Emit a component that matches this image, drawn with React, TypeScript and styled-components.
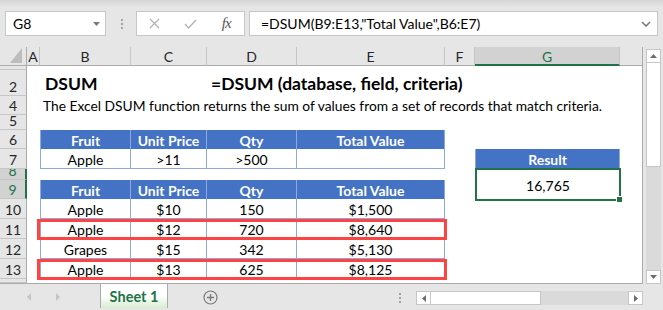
import React from 'react';
import styled, { createGlobalStyle } from 'styled-components';

const GREEN = '#217346';
const BLUE = '#4472c4';
const BLUE_LINE = '#8ea9db';
const CHROME = '#e6e6e6';
const LINE = '#c6c6c6';
const CELL_FONT = 'Lato, "Noto Sans", sans-serif';

const GlobalStyle = createGlobalStyle`
    html, body {
        margin: 0;
        padding: 0;
    }
    body {
        background: ${CHROME};
        font-family: ${CELL_FONT};
    }
`;

const Window = styled.div`
    width: 663px;
    height: 310px;
    display: flex;
    flex-direction: column;
    background: ${CHROME};
    overflow: hidden;
    color: #000;
`;

/* ---------- formula bar ---------- */

const FormulaBar = styled.div`
    height: 47px;
    flex: none;
    box-sizing: border-box;
    display: flex;
    align-items: center;
    padding: 0 5px;
    background: linear-gradient(#d5d5d5 0, ${CHROME} 7px);
`;

const NameBox = styled.div`
    width: 101px;
    height: 25px;
    box-sizing: border-box;
    background: #fff;
    border: 1px solid ${LINE};
    display: flex;
    align-items: center;
    justify-content: space-between;
    padding: 0 5px 0 7px;
    font-size: 14px;
`;

const Grip = styled.div<{ $left: number; $right: number }>`
    display: flex;
    flex-direction: column;
    gap: 2px;
    margin: 0 ${(p) => p.$right}px 0 ${(p) => p.$left}px;

    span {
        width: 2px;
        height: 2px;
        background: #a3a3a3;
    }
`;

const FxButtons = styled.div`
    width: 109px;
    height: 25px;
    box-sizing: border-box;
    background: #fff;
    border: 1px solid ${LINE};
    display: grid;
    grid-template-columns: repeat(3, 1fr);
    align-items: center;
    justify-items: center;
`;

const FxLabel = styled.span`
    font-family: 'Liberation Serif', serif;
    font-style: italic;
    font-size: 15px;
    color: #555;
    letter-spacing: -1px;
`;

const FormulaInput = styled.div`
    flex: 1;
    height: 25px;
    margin-left: 4px;
    box-sizing: border-box;
    background: #fff;
    border: 1px solid ${LINE};
    display: flex;
    align-items: center;
    justify-content: space-between;
    padding: 0 6px 0 11px;
    font-size: 14px;
`;

/* ---------- sheet ---------- */

const MainArea = styled.div`
    display: flex;
    height: 237px;
    flex: none;
`;

const Sheet = styled.div<{ $cols: string; $rows: string }>`
    width: 643px;
    height: 237px;
    box-sizing: border-box;
    display: grid;
    grid-template-columns: ${(p) => p.$cols};
    grid-template-rows: ${(p) => p.$rows};
    background: #fff;
    border-right: 1px solid #ababab;
    border-bottom: 1px solid #ababab;
    overflow: hidden;
    font-size: 14px;
`;

const Cell = styled.div<{ $col: string; $row: string }>`
    grid-column: ${(p) => p.$col};
    grid-row: ${(p) => p.$row};
    min-width: 0;
    min-height: 0;
    box-sizing: border-box;
`;

const Corner = styled(Cell)`
    background: ${CHROME};
    border-right: 1px solid #ababab;
    border-bottom: 1px solid #ababab;
    display: flex;
    align-items: flex-end;
    justify-content: flex-end;
    padding: 0 4px 2px 0;
`;

const ColHeader = styled(Cell)<{ $selected?: boolean; $blank?: boolean }>`
    background: ${(p) => (p.$selected ? '#d2d2d2' : CHROME)};
    border-right: ${(p) => (p.$blank ? 'none' : `1px solid ${LINE}`)};
    border-bottom: ${(p) => (p.$selected ? `2px solid ${GREEN}` : '1px solid #ababab')};
    color: ${(p) => (p.$selected ? GREEN : '#262626')};
    display: flex;
    align-items: center;
    justify-content: center;
    font-size: 14px;
    padding-top: 1px;
`;

const RowHeader = styled(Cell)<{ $selected?: boolean }>`
    background: ${(p) => (p.$selected ? '#d2d2d2' : CHROME)};
    border-right: ${(p) => (p.$selected ? `2px solid ${GREEN}` : '1px solid #ababab')};
    border-bottom: 1px solid ${LINE};
    color: ${(p) => (p.$selected ? GREEN : '#262626')};
    display: flex;
    align-items: flex-end;
    justify-content: center;
    overflow: hidden;
    font-size: 14px;
    line-height: 14px;
    padding-bottom: 1px;
`;

const Title = styled(Cell)<{ $indent: number }>`
    display: flex;
    align-items: center;
    padding-left: ${(p) => p.$indent}px;
    font-weight: 700;
    font-size: 17.5px;
    white-space: nowrap;
    overflow: visible;
`;

const Description = styled(Cell)`
    display: flex;
    align-items: center;
    padding-left: 3px;
    white-space: nowrap;
    font-size: 13.8px;
`;

const HeadCell = styled(Cell)<{ $first?: boolean }>`
    background: ${BLUE};
    color: #fff;
    font-weight: 700;
    display: flex;
    align-items: center;
    justify-content: center;
    padding-top: 1px;
    border-right: 1px solid ${BLUE_LINE};
    border-left: ${(p) => (p.$first ? `1px solid ${BLUE_LINE}` : 'none')};
`;

const BodyCell = styled(Cell)<{ $first?: boolean }>`
    display: flex;
    align-items: center;
    justify-content: center;
    padding-top: 2px;
    white-space: nowrap;
    border-right: 1px solid ${BLUE_LINE};
    border-bottom: 1px solid ${BLUE_LINE};
    border-left: ${(p) => (p.$first ? `1px solid ${BLUE_LINE}` : 'none')};
`;

const Highlight = styled(Cell)`
    margin: 0 -2px -1px -3px;
    border: 3px solid #ff4343;
    pointer-events: none;
`;

const Selection = styled(Cell)`
    position: relative;
    margin: -1px -1px -2px 0;
    border: 2px solid ${GREEN};
    display: flex;
    align-items: center;
    justify-content: center;
    padding-top: 1px;
`;

const FillHandle = styled.span`
    position: absolute;
    right: -4px;
    bottom: -4px;
    width: 5px;
    height: 5px;
    background: ${GREEN};
    border: 1px solid #fff;
`;

/* ---------- scrollbars ---------- */

const VScrollWrap = styled.div`
    width: 20px;
    box-sizing: border-box;
    padding: 2px 2px 0 3px;
    display: flex;
`;

const ScrollTrack = styled.div<{ $vertical?: boolean }>`
    flex: 1;
    display: flex;
    flex-direction: ${(p) => (p.$vertical ? 'column' : 'row')};
    background: #dadada;
`;

const ScrollButton = styled.div<{ $vertical?: boolean }>`
    ${(p) => (p.$vertical ? 'height: 14px;' : 'width: 15px;')}
    flex: none;
    box-sizing: border-box;
    background: #fff;
    border: 1px solid ${LINE};
    display: flex;
    align-items: center;
    justify-content: center;
`;

const Thumb = styled.div<{ $vertical?: boolean; $size: number }>`
    ${(p) => (p.$vertical ? `height: ${p.$size}px;` : `width: ${p.$size}px;`)}
    flex: none;
    box-sizing: border-box;
    background: #fff;
    border: 1px solid ${LINE};
    ${(p) => (p.$vertical ? 'border-top: none;' : 'border-left: none;')}
`;

const Spacer = styled.div`
    flex: 1;
`;

/* ---------- sheet tabs ---------- */

const TabBar = styled.div`
    flex: 1;
    display: flex;
    align-items: flex-start;
`;

const TabNav = styled.div`
    width: 100px;
    height: 26px;
    display: flex;
    align-items: center;
    padding-left: 27px;
    gap: 25px;
    box-sizing: border-box;
`;

const SheetTab = styled.div`
    width: 68px;
    height: 24px;
    box-sizing: border-box;
    background: linear-gradient(#fff 50%, #d9ecd0);
    border-left: 1px solid #ababab;
    border-right: 1px solid #ababab;
    color: ${GREEN};
    font-weight: 700;
    font-size: 14.5px;
    display: flex;
    align-items: center;
    justify-content: center;
    padding-top: 1px;
`;

const AddSheet = styled.div`
    margin: 6px 0 0 35px;
    display: flex;
`;

const GripSlot = styled.div`
    margin-top: 9px;
`;

const HScroll = styled.div`
    width: 227px;
    height: 14px;
    margin-top: 7px;
    display: flex;
`;

/* ---------- icons ---------- */

const Arrow: React.FC<{ dir: 'up' | 'down' | 'left' | 'right'; color?: string; w?: number; h?: number }> = ({
    dir,
    color = '#6d6d6d',
    w = 7,
    h = 4,
}) => {
    const horizontal = dir === 'left' || dir === 'right';
    const width = horizontal ? h : w;
    const height = horizontal ? w : h;
    const points = {
        up: `0,${h} ${w / 2},0 ${w},${h}`,
        down: `0,0 ${w},0 ${w / 2},${h}`,
        left: `${h},0 ${h},${w} 0,${w / 2}`,
        right: `0,0 0,${w} ${h},${w / 2}`,
    }[dir];
    return (
        <svg width={width} height={height} viewBox={`0 0 ${width} ${height}`}>
            <polygon points={points} fill={color} />
        </svg>
    );
};

const GripDots: React.FC<{ left: number; right: number }> = ({ left, right }) => (
    <Grip $left={left} $right={right}>
        <span />
        <span />
        <span />
    </Grip>
);

/* ---------- data ---------- */

const COLS = [
    { name: 'A', width: 13 },
    { name: 'B', width: 91 },
    { name: 'C', width: 76 },
    { name: 'D', width: 90 },
    { name: 'E', width: 148 },
    { name: 'F', width: 30 },
    { name: 'G', width: 145, selected: true },
];

// row 3 is hidden in the sheet, row 14 only peeks in at the bottom
const ROWS = [
    { label: '1', height: 4 },
    { label: '2', height: 26 },
    { label: '4', height: 19 },
    { label: '5', height: 15 },
    { label: '6', height: 19 },
    { label: '7', height: 20 },
    { label: '8', height: 11, selected: true },
    { label: '9', height: 19, selected: true },
    { label: '10', height: 20 },
    { label: '11', height: 20 },
    { label: '12', height: 20 },
    { label: '13', height: 20 },
    { label: '14', height: 0, hidden: true },
];

const col = (name: string) => COLS.findIndex((c) => c.name === name) + 2;
const row = (label: string) => ROWS.findIndex((r) => r.label === label) + 2;
const span = (from: string, to: string) => `${col(from)} / ${col(to) + 1}`;

const FIELDS = ['Fruit', 'Unit Price', 'Qty', 'Total Value'];
const FIELD_COLS = ['B', 'C', 'D', 'E'];

const CRITERIA = [['Apple', '>11', '>500', '']];
const RECORDS = [
    ['Apple', '$10', '150', '$1,500'],
    ['Apple', '$12', '720', '$8,640'],
    ['Grapes', '$15', '342', '$5,130'],
    ['Apple', '$13', '625', '$8,125'],
];
const HIGHLIGHTED = ['11', '13'];

const DataTable: React.FC<{ headerRow: number; rows: string[][] }> = ({ headerRow, rows }) => (
    <>
        {FIELDS.map((f, i) => (
            <HeadCell key={f} $col={`${col(FIELD_COLS[i])}`} $row={`${headerRow}`} $first={i === 0}>
                {f}
            </HeadCell>
        ))}
        {rows.map((r, ri) =>
            r.map((v, ci) => (
                <BodyCell
                    key={`${ri}-${ci}`}
                    $col={`${col(FIELD_COLS[ci])}`}
                    $row={`${headerRow + ri + 1}`}
                    $first={ci === 0}
                >
                    {v}
                </BodyCell>
            ))
        )}
    </>
);

const App: React.FC = () => {
    const gridCols = `27px ${COLS.map((c) => `${c.width}px`).join(' ')} 1fr`;
    const gridRows = `19px ${ROWS.map((r) => (r.height ? `${r.height}px` : '1fr')).join(' ')}`;

    return (
        <Window>
            <GlobalStyle />
            <FormulaBar>
                <NameBox>
                    <span>G8</span>
                    <Arrow dir="down" color="#7a7a7a" />
                </NameBox>
                <GripDots left={15} right={13} />
                <FxButtons>
                    <svg width="11" height="11" viewBox="0 0 11 11">
                        <path d="M1 1 L10 10 M10 1 L1 10" stroke="#b3b3b3" strokeWidth="1.3" fill="none" />
                    </svg>
                    <svg width="13" height="10" viewBox="0 0 13 10">
                        <path d="M1 5 L4.5 9 L12 1" stroke="#b3b3b3" strokeWidth="1.3" fill="none" />
                    </svg>
                    <FxLabel>fx</FxLabel>
                </FxButtons>
                <FormulaInput>
                    <span>=DSUM(B9:E13,"Total Value",B6:E7)</span>
                    <svg width="10" height="6" viewBox="0 0 10 6">
                        <path d="M1 1 L5 5 L9 1" stroke="#7a7a7a" strokeWidth="1.6" fill="none" />
                    </svg>
                </FormulaInput>
            </FormulaBar>

            <MainArea>
                <Sheet $cols={gridCols} $rows={gridRows}>
                    <Corner $col="1" $row="1">
                        <svg width="12" height="15" viewBox="0 0 12 15">
                            <polygon points="12,0 12,15 0,15" fill="#bdbdbd" />
                        </svg>
                    </Corner>
                    {COLS.map((c) => (
                        <ColHeader key={c.name} $col={`${col(c.name)}`} $row="1" $selected={c.selected}>
                            {c.name}
                        </ColHeader>
                    ))}
                    <ColHeader $col={`${COLS.length + 2}`} $row="1" $blank />
                    {ROWS.map((r) => (
                        <RowHeader key={r.label} $col="1" $row={`${row(r.label)}`} $selected={r.selected}>
                            {r.hidden ? null : r.label}
                        </RowHeader>
                    ))}

                    <Title $col={span('B', 'B')} $row={`${row('2')}`} $indent={5}>
                        DSUM
                    </Title>
                    <Title $col={span('D', 'F')} $row={`${row('2')}`} $indent={4}>
                        =DSUM (database, field, criteria)
                    </Title>
                    <Description $col={span('B', 'G')} $row={`${row('4')}`}>
                        The Excel DSUM function returns the sum of values from a set of records that match criteria.
                    </Description>

                    <DataTable headerRow={row('6')} rows={CRITERIA} />
                    <DataTable headerRow={row('9')} rows={RECORDS} />

                    <HeadCell $col={`${col('G')}`} $row={`${row('7')}`} $first>
                        Result
                    </HeadCell>
                    <Selection $col={`${col('G')}`} $row={`${row('8')} / ${row('9') + 1}`}>
                        16,765
                        <FillHandle />
                    </Selection>

                    {HIGHLIGHTED.map((r) => (
                        <Highlight key={r} $col={span('B', 'E')} $row={`${row(r)}`} />
                    ))}
                </Sheet>

                <VScrollWrap>
                    <ScrollTrack $vertical>
                        <ScrollButton $vertical>
                            <Arrow dir="up" />
                        </ScrollButton>
                        <Thumb $vertical $size={104} />
                        <Spacer />
                        <ScrollButton $vertical>
                            <Arrow dir="down" />
                        </ScrollButton>
                    </ScrollTrack>
                </VScrollWrap>
            </MainArea>

            <TabBar>
                <TabNav>
                    <Arrow dir="left" color="#c4c4c4" w={8} h={4} />
                    <Arrow dir="right" color="#c4c4c4" w={8} h={4} />
                </TabNav>
                <SheetTab>Sheet 1</SheetTab>
                <AddSheet>
                    <svg width="15" height="15" viewBox="0 0 15 15">
                        <circle cx="7.5" cy="7.5" r="6.5" stroke="#7a7a7a" strokeWidth="1.2" fill="none" />
                        <path d="M7.5 4 V11 M4 7.5 H11" stroke="#7a7a7a" strokeWidth="1.4" />
                    </svg>
                </AddSheet>
                <GripSlot>
                    <GripDots left={181} right={15} />
                </GripSlot>
                <HScroll>
                    <ScrollTrack>
                        <ScrollButton>
                            <Arrow dir="left" />
                        </ScrollButton>
                        <Thumb $size={110} />
                        <Spacer />
                        <ScrollButton>
                            <Arrow dir="right" />
                        </ScrollButton>
                    </ScrollTrack>
                </HScroll>
            </TabBar>
        </Window>
    );
};

export default App;
